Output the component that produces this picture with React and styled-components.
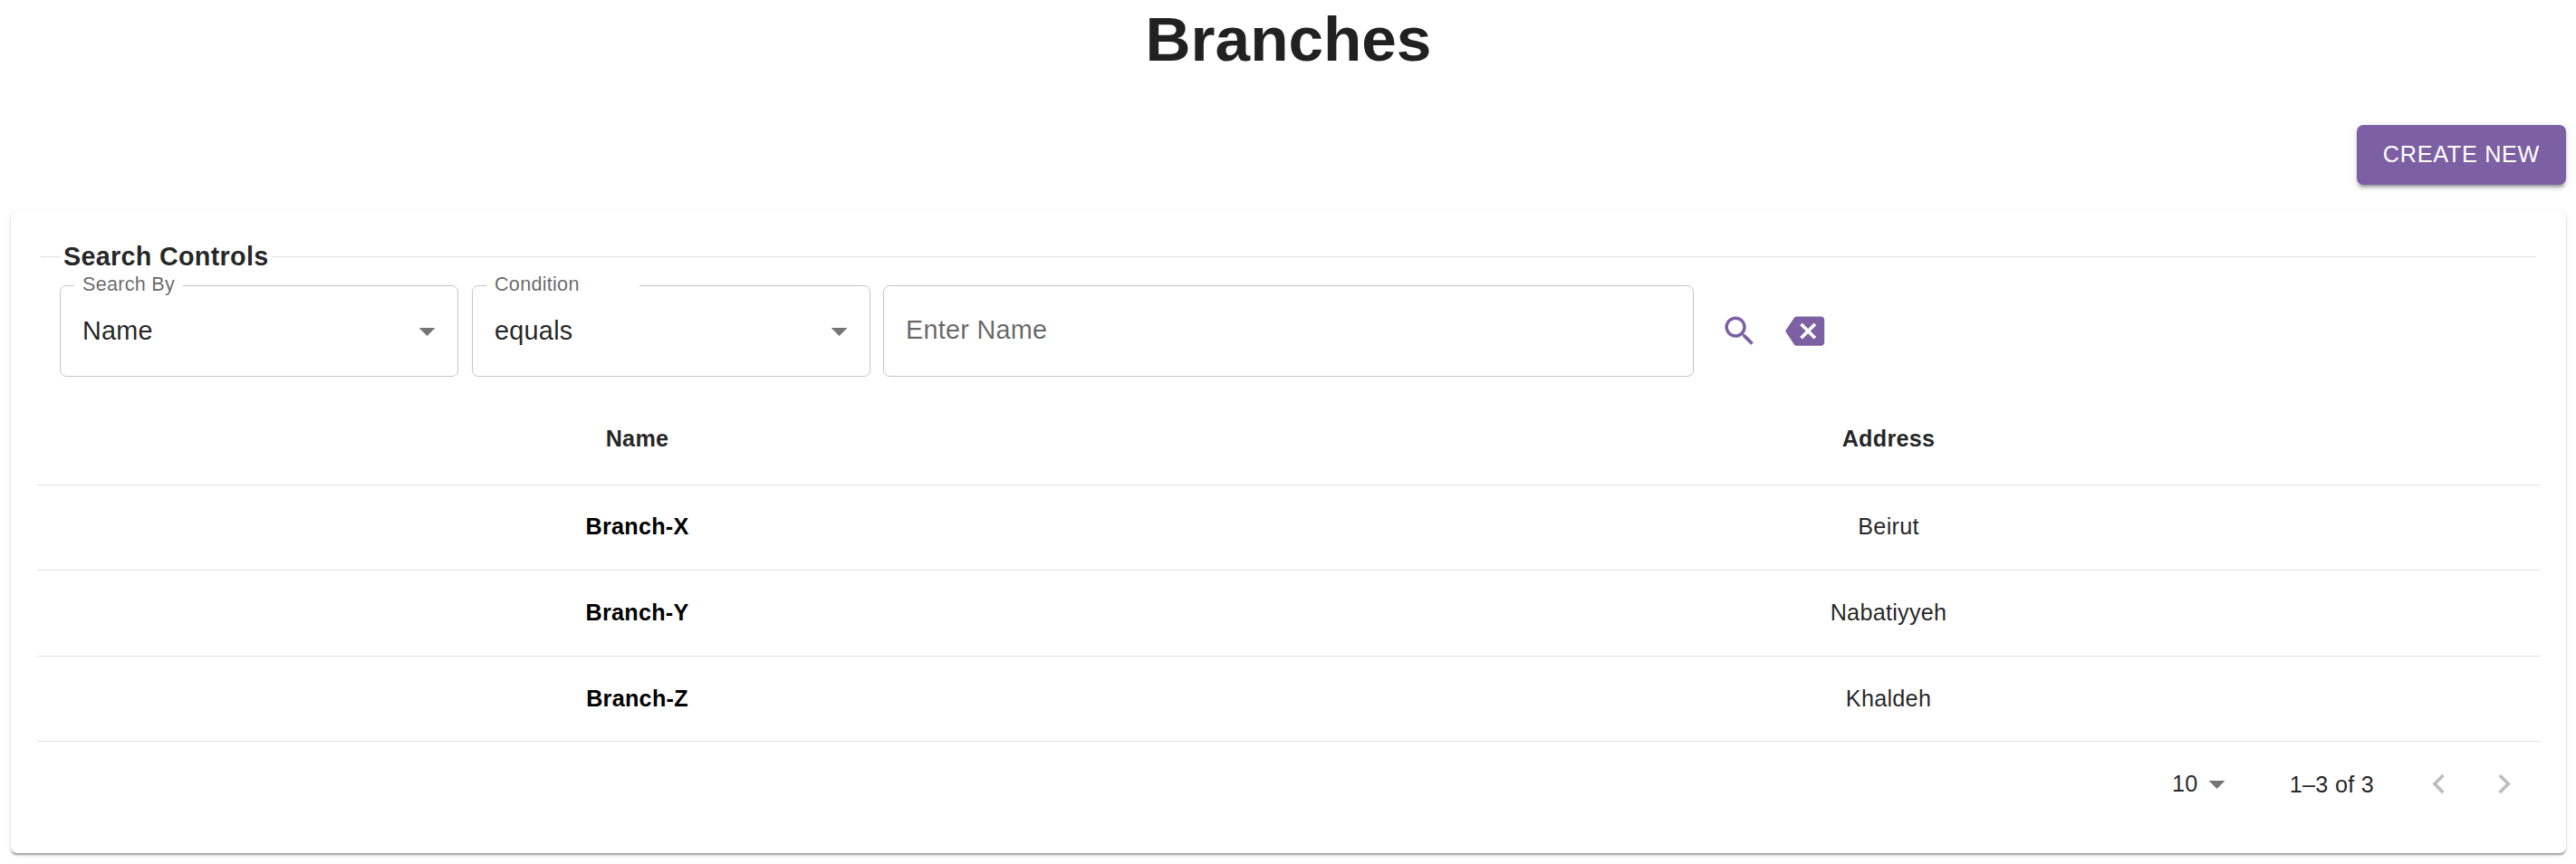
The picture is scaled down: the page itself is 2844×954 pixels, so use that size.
import React from "react";
import styled, { createGlobalStyle } from "styled-components";

const PURPLE = "#7d60a3";
const INK = "rgba(0, 0, 0, 0.87)";
const MUTED = "rgba(0, 0, 0, 0.6)";
const RULE = "#e0e0e0";

const GlobalStyle = createGlobalStyle`
  *, *::before, *::after { box-sizing: border-box; }
  body {
    margin: 0;
    background: #fff;
    color: ${INK};
    font-family: "Liberation Sans", Arial, Helvetica, sans-serif;
    font-size: 28.8px;
    letter-spacing: 0.00938em;
  }
`;

const Page = styled.main`
  display: flex;
  flex-direction: column;
  height: 954px;
  padding: 0 11px 12px 12px;
  overflow: hidden;
`;

const Title = styled.h1`
  margin: 0;
  padding-top: 3px;
  height: 138px;
  font-size: 69.3px;
  line-height: 80px;
  letter-spacing: 0;
  text-align: center;
`;

const CreateButton = styled.button`
  align-self: flex-end;
  height: 66px;
  width: 231px;
  margin-bottom: 29px;
  padding: 0 0 2px;
  border: 0;
  border-radius: 7.2px;
  background: ${PURPLE};
  color: #fff;
  font: inherit;
  font-size: 25.2px;
  letter-spacing: 0.02857em;
  text-transform: uppercase;
  white-space: nowrap;
  box-shadow:
    0 5.4px 1.8px -3.6px rgba(0, 0, 0, 0.2),
    0 3.6px 3.6px 0 rgba(0, 0, 0, 0.14),
    0 1.8px 9px 0 rgba(0, 0, 0, 0.12);
`;

const Card = styled.section`
  flex: 1;
  display: flex;
  flex-direction: column;
  padding: 34px 29px 0;
  border-radius: 7.2px;
  background: #fff;
  box-shadow:
    0 3.6px 1.8px -1.8px rgba(0, 0, 0, 0.2),
    0 1.8px 1.8px 0 rgba(0, 0, 0, 0.14),
    0 2px 5.4px 0 rgba(0, 0, 0, 0.12);
`;

const SectionHeading = styled.h2`
  display: flex;
  align-items: center;
  gap: 4px;
  height: 33px;
  margin: 0 4px 15px;
  font-size: 28.8px;
  line-height: 33px;
  white-space: nowrap;

  &::before,
  &::after {
    content: "";
    height: 1px;
    background: ${RULE};
  }
  &::before { width: 21px; }
  &::after { flex: 1; }
`;

const Controls = styled.div`
  display: flex;
  align-items: center;
  height: 101px;
  padding-left: 25px;
`;

const Field = styled.div`
  position: relative;
  display: flex;
  align-items: center;
  justify-content: space-between;
  width: ${(p) => p.$width}px;
  height: 101px;
  margin-right: ${(p) => p.$after}px;
  padding: 0 12px 0 24px;
  border: 1px solid #c4c4c4;
  border-radius: 7.2px;
  line-height: 42px;
`;

const FieldLabel = styled.label`
  position: absolute;
  top: -15px;
  left: 15px;
  width: ${(p) => p.$width}px;
  padding-left: 9px;
  background: #fff;
  color: ${MUTED};
  font-size: 21.6px;
  line-height: 26px;
`;

const Value = styled.span`
  padding-bottom: 2px;
`;

const Placeholder = styled.span`
  padding-bottom: 4px;
  color: ${MUTED};
`;

const IconButton = styled.button`
  display: flex;
  width: 72px;
  height: 72px;
  padding: 14.4px;
  border: 0;
  background: none;
  color: ${(p) => (p.disabled ? "rgba(0, 0, 0, 0.26)" : PURPLE)};
`;

const Svg = styled.svg`
  flex: none;
  width: 43.2px;
  height: 43.2px;
  fill: currentColor;
`;

const Table = styled.table`
  width: 100%;
  margin-top: 25px;
  border-collapse: separate;
  border-spacing: 0;
  table-layout: fixed;
  font-size: 25.2px;
  letter-spacing: 0.01071em;
`;

const Cell = styled.td`
  width: ${(p) => p.$width || "auto"};
  height: ${(p) => p.$height}px;
  padding: 0 0 ${(p) => p.$lift}px;
  border-bottom: 1px solid ${RULE};
  color: ${(p) => (p.$strong ? "#000" : INK)};
  font-weight: ${(p) => (p.$strong || p.as === "th" ? 700 : 400)};
  line-height: 36px;
  text-align: center;
`;

const Pagination = styled.div`
  display: flex;
  align-items: center;
  justify-content: flex-end;
  height: 94px;
  padding-right: 3px;
  font-size: 25.2px;
  line-height: 36px;
`;

const PageSize = styled.div`
  display: flex;
  align-items: center;
  margin-right: 59px;

  span { padding-bottom: 2px; }
`;

const Range = styled.span`
  margin-right: 36px;
  padding-bottom: 1px;
`;

const Caret = styled(Svg)`
  margin-left: -1px;
  color: rgba(0, 0, 0, 0.54);
`;

const paths = {
  caret: "M7 10l5 5 5-5z",
  search:
    "M15.5 14h-.79l-.28-.27C15.41 12.59 16 11.11 16 9.5 16 5.91 13.09 3 9.5 3S3 5.91 3 9.5 5.91 16 9.5 16c1.61 0 3.09-.59 4.23-1.57l.27.28v.79l5 4.99L20.49 19l-4.99-5zm-6 0C7.01 14 5 11.99 5 9.5S7.01 5 9.5 5 14 7.01 14 9.5 11.99 14 9.5 14z",
  backspace:
    "M22 3H7c-.69 0-1.23.35-1.59.88L0 12l5.41 8.11c.36.53.9.89 1.59.89h15c1.1 0 2-.9 2-2V5c0-1.1-.9-2-2-2zm-3 12.59L17.59 17 14 13.41 10.41 17 9 15.59 12.59 12 9 8.41 10.41 7 14 10.59 17.59 7 19 8.41 15.41 12 19 15.59z",
  previous: "M15.41 16.59L10.83 12l4.58-4.59L14 6l-6 6 6 6 1.41-1.41z",
  next: "M8.59 16.59L13.17 12 8.59 7.41 10 6l6 6-6 6-1.41-1.41z",
};

function Icon({ name, as: Shape = Svg }) {
  return (
    <Shape viewBox="0 0 24 24" aria-hidden="true">
      <path d={paths[name]} />
    </Shape>
  );
}

function Select({ label, value, labelWidth, after }) {
  return (
    <Field $width={440} $after={after}>
      <FieldLabel $width={labelWidth}>{label}</FieldLabel>
      <Value>{value}</Value>
      <Icon name="caret" as={Caret} />
    </Field>
  );
}

const branches = [
  { name: "Branch-X", address: "Beirut", height: 94, lift: 4 },
  { name: "Branch-Y", address: "Nabatiyyeh", height: 95, lift: 2 },
  { name: "Branch-Z", address: "Khaldeh", height: 94, lift: 2 },
];

export default function App() {
  return (
    <>
      <GlobalStyle />
      <Page>
        <Title>Branches</Title>
        <CreateButton>Create new</CreateButton>
        <Card>
          <SectionHeading>Search Controls</SectionHeading>
          <Controls>
            <Select label="Search By" value="Name" labelWidth={120} after={15} />
            <Select label="Condition" value="equals" labelWidth={169} after={14} />
            <Field $width={895} $after={15}>
              <Placeholder>Enter Name</Placeholder>
            </Field>
            <IconButton aria-label="Search">
              <Icon name="search" />
            </IconButton>
            <IconButton aria-label="Clear">
              <Icon name="backspace" />
            </IconButton>
          </Controls>
          <Table>
            <thead>
              <tr>
                <Cell as="th" $height={95} $lift={8} $width="1325px">Name</Cell>
                <Cell as="th" $height={95} $lift={8}>Address</Cell>
              </tr>
            </thead>
            <tbody>
              {branches.map((b) => (
                <tr key={b.name}>
                  <Cell $strong $height={b.height} $lift={b.lift}>{b.name}</Cell>
                  <Cell $height={b.height} $lift={b.lift}>{b.address}</Cell>
                </tr>
              ))}
            </tbody>
          </Table>
          <Pagination>
            <PageSize>
              <span>10</span>
              <Icon name="caret" as={Caret} />
            </PageSize>
            <Range>1–3 of 3</Range>
            <IconButton disabled aria-label="Previous page">
              <Icon name="previous" />
            </IconButton>
            <IconButton disabled aria-label="Next page">
              <Icon name="next" />
            </IconButton>
          </Pagination>
        </Card>
      </Page>
    </>
  );
}
